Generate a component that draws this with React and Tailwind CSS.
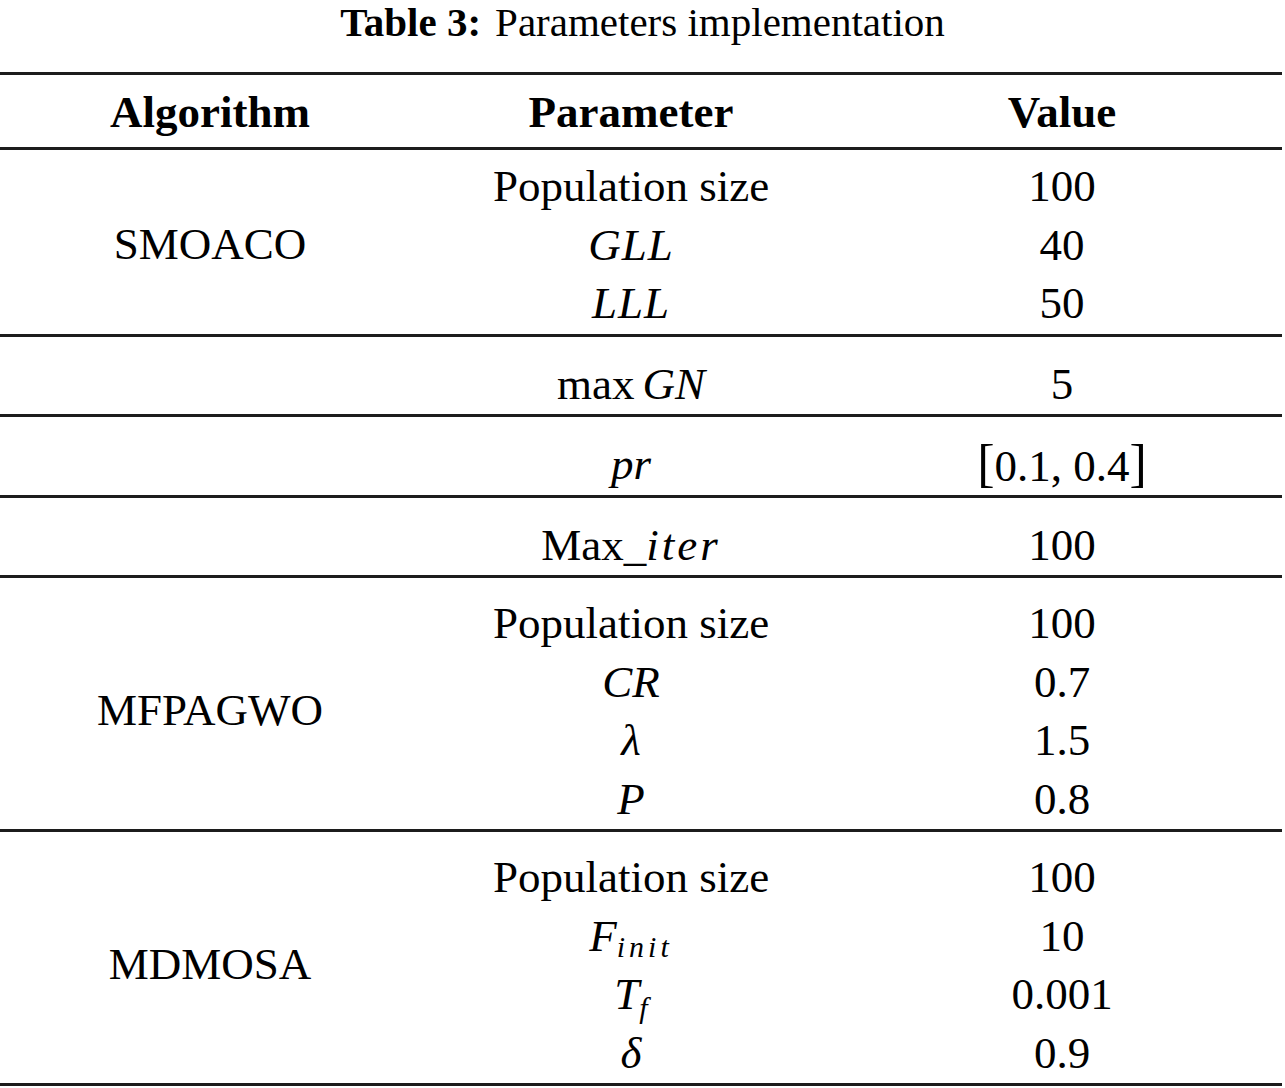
import React from 'react';

const groups = [
  {
    name: 'SMOACO',
    pad: 'pt-[7px] pb-[1px]',
    rows: [
      [<span>Population size</span>, '100'],
      [<i className="tracking-[1px]">GLL</i>, '40'],
      [<i className="tracking-[1px]">LLL</i>, '50'],
    ],
  },
  {
    name: '',
    pad: 'pt-[18px] pb-[1px]',
    rows: [[<span>max<i className="ml-[8px]">GN</i></span>, '5']],
  },
  {
    name: '',
    pad: 'pt-[18px] pb-[1px]',
    rows: [[<i>pr</i>, <span><span className="text-[52px] font-light">[</span>0.1, 0.4<span className="text-[52px] font-light">]</span></span>]],
  },
  {
    name: '',
    pad: 'pt-[18px] pb-[1px]',
    rows: [[<span>Max_<i className="tracking-[3px]">iter</i></span>, '100']],
  },
  {
    name: 'MFPAGWO',
    pad: 'pt-[16px] pb-[1px]',
    rows: [
      [<span>Population size</span>, '100'],
      [<i>CR</i>, '0.7'],
      [<i>λ</i>, '1.5'],
      [<i>P</i>, '0.8'],
    ],
  },
  {
    name: 'MDMOSA',
    pad: 'pt-[16px] pb-[1px]',
    rows: [
      [<span>Population size</span>, '100'],
      [<span><i>F</i><sub className="italic text-[30px] tracking-[4px] relative top-[6px]">init</sub></span>, '10'],
      [<span><i>T</i><sub className="italic text-[30px] relative top-[9px]">f</sub></span>, '0.001'],
      [<i>δ</i>, '0.9'],
    ],
  },
];

function Rule() {
  return <div className="h-[3px] w-[1282px] bg-[#1c1c1c]"></div>;
}

export default function App() {
  return (
    <div className="w-[1285px] h-[1088px] bg-white text-black font-['Liberation_Serif',serif] overflow-hidden">
      <div className="h-[72px] flex justify-center pt-[1px]">
        <div className="text-[41px] leading-[42px] w-[1282px] text-center">
          <span className="font-bold">Table 3:</span>
          <span className="ml-[14px]">Parameters implementation</span>
        </div>
      </div>
      <Rule />
      <div className="grid grid-cols-[420px_422px_440px] h-[72px] items-center text-[45px] font-bold pt-[3px]">
        <div className="text-center">Algorithm</div>
        <div className="text-center">Parameter</div>
        <div className="text-center">Value</div>
      </div>
      <Rule />
      {groups.map((g, gi) => (
        <div key={gi}>
          <div className={`grid grid-cols-[420px_422px_440px] text-[45px] ${g.pad}`}>
            <div className="flex items-center justify-center">{g.name}</div>
            <div className="flex flex-col">
              {g.rows.map((r, ri) => (
                <div key={ri} className="h-[58.5px] leading-[58.5px] text-center whitespace-nowrap">{r[0]}</div>
              ))}
            </div>
            <div className="flex flex-col">
              {g.rows.map((r, ri) => (
                <div key={ri} className="h-[58.5px] leading-[58.5px] text-center whitespace-nowrap">{r[1]}</div>
              ))}
            </div>
          </div>
          <Rule />
        </div>
      ))}
    </div>
  );
}
